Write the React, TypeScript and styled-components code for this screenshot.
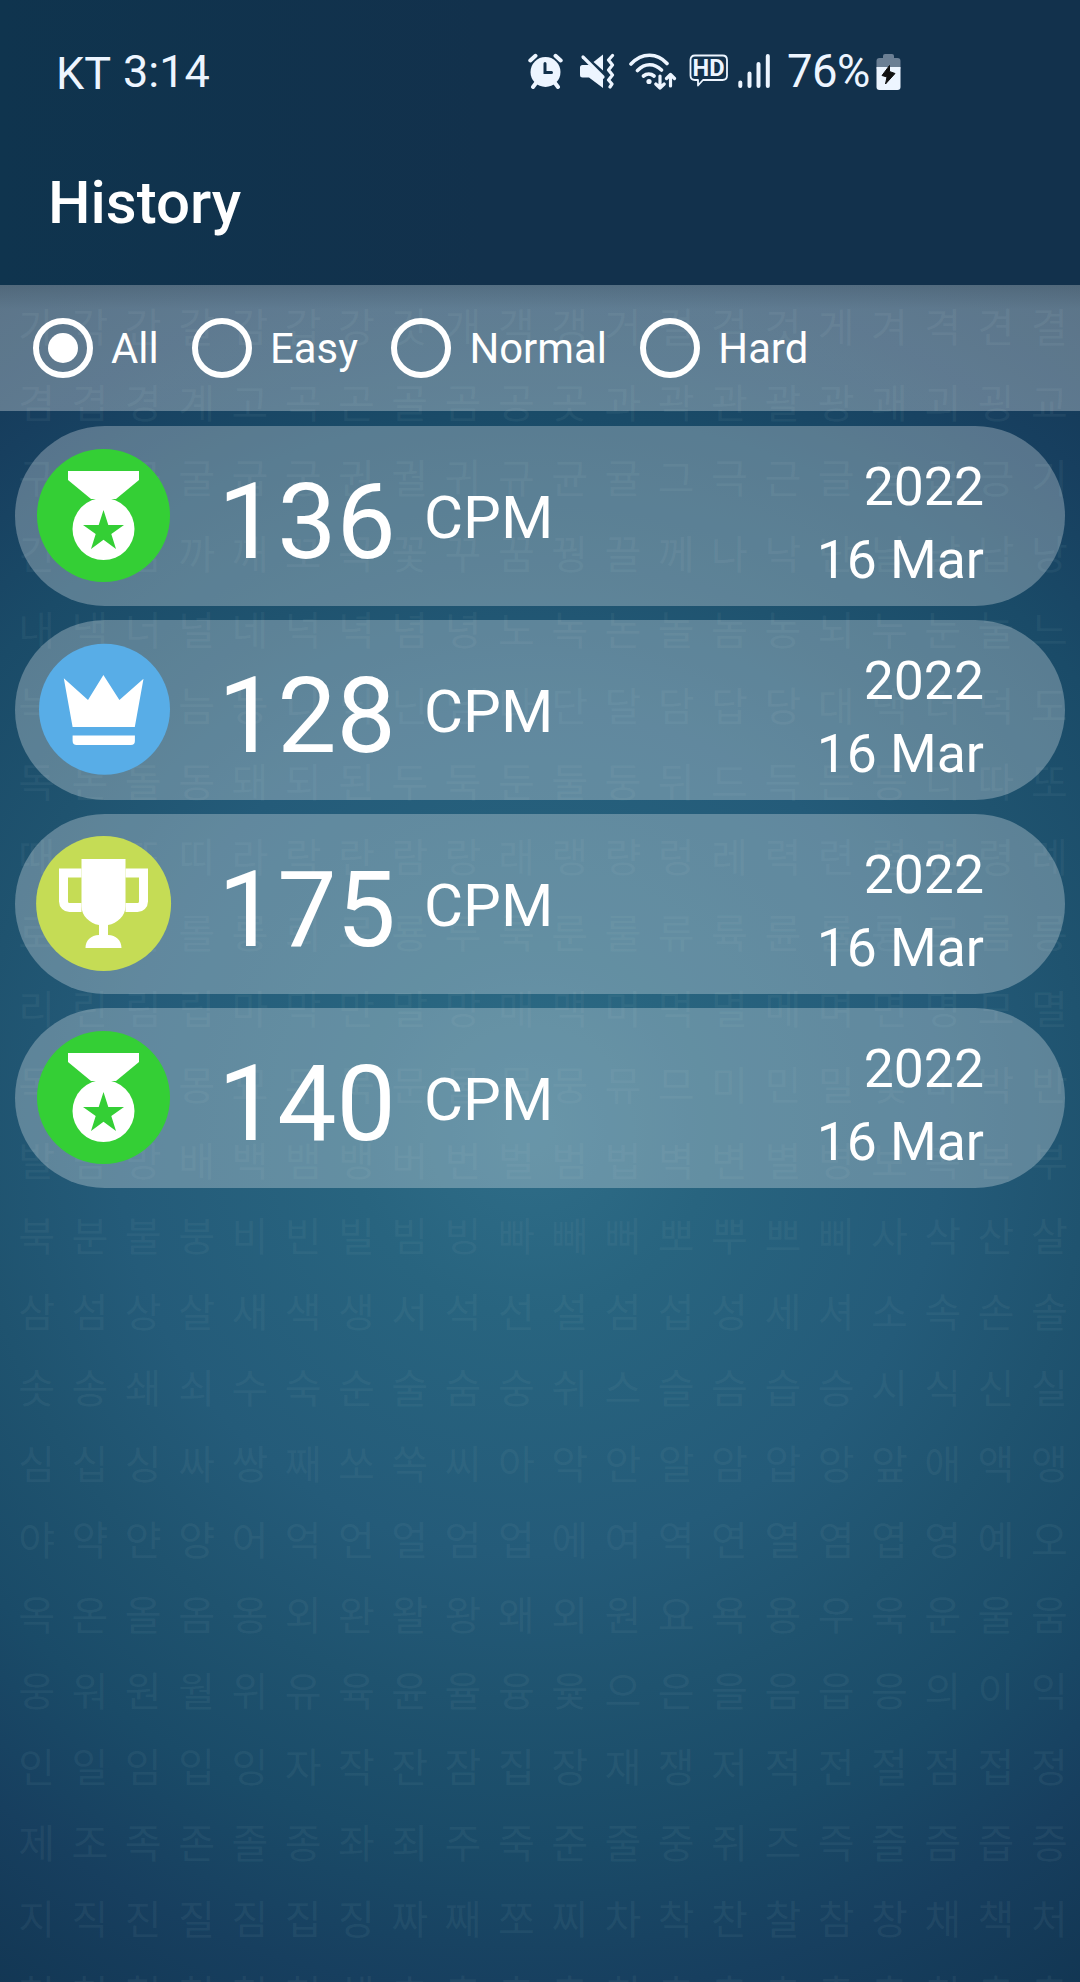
import React, { useState } from "react";
import styled, { createGlobalStyle } from "styled-components";

const GlobalStyle = createGlobalStyle`
  *, *::before, *::after { box-sizing: border-box; }
  body { margin: 0; background: #11324d; }
`;

const Screen = styled.div`
  display: grid;
  width: 1080px;
  height: 1982px;
  overflow: hidden;
  color: #fff;
  font-family: Roboto, "Noto Sans", sans-serif;
  background: radial-gradient(
    ellipse 900px 920px at 530px 1130px,
    #2f6d88 0%,
    #28647f 20%,
    #245b79 46%,
    #1f536f 62%,
    #1a4b68 78%,
    #173f5f 94%,
    #113450 116%
  );
`;

const Backdrop = styled.div`
  grid-area: 1 / 1;
  display: grid;
  grid-template-columns: repeat(20, 53.3px);
  grid-auto-rows: 75.8px;
  align-content: start;
  height: 1982px;
  overflow: hidden;
  padding: 287px 0 0 10px;
`;

const Syllable = styled.span`
  display: flex;
  align-items: center;
  justify-content: center;
  font: 400 40px/1 "Noto Sans CJK KR", sans-serif;
  color: rgba(130, 165, 175, 0.1);
`;

const Content = styled.div`
  grid-area: 1 / 1;
  display: flex;
  flex-direction: column;
`;

const Header = styled.header`
  height: 285px;
  background: linear-gradient(90deg, #0f344e, #12314c 45%, #12314c);
`;

const StatusBar = styled.div`
  display: flex;
  height: 142px;
  padding: 0 179px 0 56px;
  align-items: center;
  color: #edf5ff;
  font-size: 45px;
  line-height: 52px;
`;

const Carrier = styled.span`
  width: 67px;
  padding-top: 5px;
`;

const Clock = styled.span`
  flex: 1;
  padding-top: 2px;
`;

const StatusIcons = styled.div`
  display: flex;
  align-items: center;

  svg { display: block; }
`;

const Percent = styled.span`
  width: 89px;
  margin-left: 16px;
  padding-top: 1px;
  white-space: nowrap;
  font-size: 45.5px;
  letter-spacing: -0.6px;
`;

const Title = styled.h1`
  margin: 0;
  padding-left: 48px;
  font-size: 60px;
  font-weight: 500;
  line-height: 122px;
`;

const FilterBar = styled.div`
  display: flex;
  align-items: center;
  gap: 33.5px;
  height: 126px;
  padding-left: 33px;
  background: linear-gradient(rgba(190, 190, 190, 0.36), rgba(255, 255, 255, 0.31) 24px);
`;

const Option = styled.button`
  display: flex;
  align-items: center;
  gap: 18px;
  padding: 0;
  border: 0;
  background: none;
  color: inherit;
  font: 400 41.8px/60px Roboto, sans-serif;
  cursor: pointer;
`;

const Ring = styled.span<{ $checked: boolean }>`
  display: flex;
  align-items: center;
  justify-content: center;
  width: 60px;
  height: 60px;
  border: 6px solid #fff;
  border-radius: 50%;

  &::after {
    content: "";
    display: ${(p) => (p.$checked ? "block" : "none")};
    width: 30px;
    height: 30px;
    border-radius: 50%;
    background: #fff;
  }
`;

const OptionLabel = styled.span`
  padding-top: 2px;
`;

const List = styled.ul`
  display: flex;
  flex-direction: column;
  gap: 14px;
  margin: 0;
  padding: 15px 15px 0;
  list-style: none;
`;

const Card = styled.li`
  display: flex;
  align-items: center;
  height: 180px;
  padding: 0 81px 0 21px;
  border-radius: 90px;
  background: rgba(255, 255, 255, 0.28);
`;

const Badge = styled.svg`
  display: block;
  width: 136px;
  height: 136px;
`;

const Score = styled.span`
  width: 206px;
  margin-left: 46px;
  padding-top: 12px;
  font-size: 105.5px;
  line-height: 124px;
`;

const Unit = styled.span`
  flex: 1;
  padding-top: 4px;
  font-size: 60px;
  line-height: 68px;
`;

const When = styled.div`
  display: flex;
  flex-direction: column;
  align-items: flex-end;
  padding-top: 13px;
  font-size: 53.5px;
  line-height: 73px;
`;

const SYLLABLES = [
  "가각간갈감갑강갓개객갱거걸검것게겨격견결",
  "겸겹경계고곡곤골곰공곳과곽관괄광괘괴굉교",
  "구국군굴굽궁권궐귀규균귤그극근글금급긍기",
  "긴길김까깨꼬꼭꽃꾸꿈꿩끌께나낙난날남납낭",
  "내낵너널네넉녁념녕노녹논놀놈농뇌누눈눌느",
  "늑는늘늠능니닉닌님다단달담답당대댁더덕도",
  "독돈돌동돼되된두둑둔둘둥뒤드득든등디따또",
  "때떠뜨띠라락란람랑래랭량렁레력련렬렴령례",
  "로록론롤롱뢰료룡루룩룬룰류륙륜률륭르름릉",
  "리린림립마막만말망매맥머먹멀메며면명모멸",
  "목몰몸몽묘무묵문물뭄뭉뮤므미민밀및바박반",
  "발밤방배백뱀뱅버번벌범법벽변별병보복본부",
  "북분불붕비빈빌빔빙빠빼뻐뽀뿌쁘삐사삭산살",
  "삼섬상살새색생서석선설섬섭성세셔소속손솔",
  "솟송쇄쇠수숙순술숨숭쉬스슬슴습승시식신실",
  "심십싱싸쌍째쏘쏙씨아악안알암압앙앞애액앵",
  "야약얀양어억언얼엄업에여역연열염엽영예오",
  "옥온올옴옹외완왈왕왜외원요욕용우욱운울움",
  "웅워원월위유육윤율융윷으은을음읍응의이익",
  "인일임입잉자작잔잠집장재쟁저적전절점접정",
  "제조족존졸종좌죄주죽준줄중쥐즈즉즐즘즙증",
  "지직진질짐집징짜째쪼찌차착찬찰참창채책처",
  "척천철첨첩청체초촉촌총최추축춘출충취측층",
];

type Award = "medal" | "crown" | "trophy";

const AwardBadge = ({ kind }: { kind: Award }) => {
  if (kind === "crown") {
    return (
      <Badge viewBox="0 0 136 136">
        <circle cx="68.5" cy="67.3" r="65.5" fill="#58ade7" />
        <path d="M27.8 36.2 52 58 67.4 33 83.4 58 107.5 36.8 98.8 85H36.6z" fill="#fff" />
        <path d="M36.6 93.6h62.3v5.4a4 4 0 0 1-4 4H40.6a4 4 0 0 1-4-4z" fill="#fff" />
      </Badge>
    );
  }
  if (kind === "trophy") {
    return (
      <Badge viewBox="0 0 136 136">
        <circle cx="67.6" cy="67.5" r="67.5" fill="#c5dc55" />
        <path d="M45.5 37H27.5v28.5a6 6 0 0 0 6 6h12M89.5 37h18v28.5a6 6 0 0 1-6 6h-12" fill="none" stroke="#fff" strokeWidth="9" />
        <path d="M45.5 23h44v47.5c0 9-8 17-17.5 18.5V99c8 .5 13.500 5 13.500 13h-36c0-8 5.500-12.500 13.500-13V89c-9.500-1.500-17.500-9.500-17.500-18.500z" fill="#fff" />
      </Badge>
    );
  }
  return (
    <Badge viewBox="0 0 136 136">
      <circle cx="67.5" cy="67.5" r="66.5" fill="#34cf35" />
      <path d="M32 23h71v9L80 51H55L32 32z" fill="#fff" />
      <circle cx="67.5" cy="81" r="31" fill="#fff" />
      <path d="M67.5 62 72.3 77H88L75.3 86 80 101 67.5 91.7 55 101 59.7 86 47 77H62.7z" fill="#34cf35" />
    </Badge>
  );
};

const AlarmIcon = () => (
  <svg width="35" height="36" viewBox="0 0 35 36" fill="none" stroke="currentColor" strokeLinecap="round">
    <path d="M2.300 7.500 7.500 2.800M32.700 7.500 27.500 2.800" strokeWidth="4" />
    <path d="M8 30 5 34M27 30l3 4" strokeWidth="4" />
    <circle cx="17.500" cy="19" r="15" fill="currentColor" stroke="none" />
    <path d="M17 10.500V19.500H23.500" stroke="#12314c" strokeWidth="3" />
  </svg>
);

const VibrateMuteIcon = () => (
  <svg width="36" height="36" viewBox="0 0 36 36" fill="none" stroke="currentColor" strokeLinecap="round" strokeLinejoin="round">
    <path d="M1 14.500Q1 12 3.500 12H10L24 24V35L10 24.500H3.500Q1 24.500 1 22z" fill="currentColor" stroke="none" />
    <path d="M14.500 9 24 1.500V17.500z" fill="currentColor" stroke="none" />
    <path d="M4 4 24 24" strokeWidth="3.200" />
    <path d="M33.500 2.500 29.500 7 33.500 12 29.500 17 33.500 22 29.500 27 33 31 31 34" strokeWidth="3.200" />
  </svg>
);

const WifiIcon = () => (
  <svg width="48" height="37" viewBox="0 0 48 37" fill="none" stroke="currentColor" strokeLinecap="round" strokeLinejoin="round">
    <path d="M2 11C13-.5 28-.5 38 10.500M8.500 17.500C16 10 25 10 32.500 17M14.500 23C17.500 20.500 22 20.500 25 23" strokeWidth="3.600" />
    <circle cx="20" cy="28.500" r="2.600" fill="currentColor" stroke="none" />
    <path d="M31 23V35M26.800 31 31 35 35.200 31M41.500 33V21.500M37.500 25.500l4-4 4 4" strokeWidth="3.200" />
  </svg>
);

const HdGlyphs = styled.text`
  font: 700 24px Roboto, sans-serif;
  fill: currentColor;
`;

const HdIcon = () => (
  <svg width="40" height="34" viewBox="0 0 40 34" fill="none" stroke="currentColor" strokeLinejoin="round">
    <path d="M6 1.500H33.500Q38 1.500 38 6V21.500Q38 26 33.500 26H14L9 31.500V26H6Q1.500 26 1.500 21.500V6Q1.500 1.500 6 1.500z" strokeWidth="1.800" />
    <HdGlyphs x="3.500" y="22.300" textLength="32" lengthAdjust="spacingAndGlyphs" stroke="none">HD</HdGlyphs>
  </svg>
);

const SignalIcon = () => (
  <svg width="33" height="36" viewBox="0 0 33 36" stroke="currentColor" strokeWidth="4" strokeLinecap="round">
    <path d="M2.300 29.500V33M11.500 20.500V33M20.500 11V33M29.800 3V33" />
  </svg>
);

const BatteryIcon = () => (
  <svg width="25" height="37" viewBox="0 0 25 37">
    <path d="M7 3Q7 1 9 1H16Q18 1 18 3V5H21.500Q24.500 5 24.500 8V16H.5V8Q.5 5 3.500 5H7z" fill="#6b7f94" />
    <path d="M.5 14H24.500V34Q24.500 37 21.500 37H3.500Q.5 37 .5 34z" fill="#edf5ff" />
    <path d="M13.500 12.500 6 22.500 11 24 9.500 31 19 20.500 13.500 18.500z" fill="#111" stroke="#111" strokeLinejoin="round" />
  </svg>
);

const IconRow = styled.div`
  display: grid;
  grid-template-columns: 51px 50px 60.5px 49px 33px;
  align-items: center;
`;

const LEVELS = ["All", "Easy", "Normal", "Hard"];

const RECORDS: { award: Award; cpm: number; year: string; day: string }[] = [
  { award: "medal", cpm: 136, year: "2022", day: "16 Mar" },
  { award: "crown", cpm: 128, year: "2022", day: "16 Mar" },
  { award: "trophy", cpm: 175, year: "2022", day: "16 Mar" },
  { award: "medal", cpm: 140, year: "2022", day: "16 Mar" },
];

export default function App() {
  const [level, setLevel] = useState("All");

  return (
    <Screen>
      <GlobalStyle />
      <Backdrop aria-hidden="true">
        {SYLLABLES.flatMap((row, r) =>
          Array.from(row).map((s, c) => <Syllable key={`${r}-${c}`}>{s}</Syllable>)
        )}
      </Backdrop>
      <Content>
        <Header>
          <StatusBar>
            <Carrier>KT</Carrier>
            <Clock>3:14</Clock>
            <StatusIcons>
              <IconRow>
                <AlarmIcon />
                <VibrateMuteIcon />
                <WifiIcon />
                <HdIcon />
                <SignalIcon />
              </IconRow>
              <Percent>76%</Percent>
              <BatteryIcon />
            </StatusIcons>
          </StatusBar>
          <Title>History</Title>
        </Header>
        <FilterBar role="radiogroup">
          {LEVELS.map((name) => (
            <Option key={name} role="radio" aria-checked={level === name} onClick={() => setLevel(name)}>
              <Ring $checked={level === name} />
              <OptionLabel>{name}</OptionLabel>
            </Option>
          ))}
        </FilterBar>
        <List>
          {RECORDS.map((rec, i) => (
            <Card key={i}>
              <AwardBadge kind={rec.award} />
              <Score>{rec.cpm}</Score>
              <Unit>CPM</Unit>
              <When>
                <span>{rec.year}</span>
                <span>{rec.day}</span>
              </When>
            </Card>
          ))}
        </List>
      </Content>
    </Screen>
  );
}
